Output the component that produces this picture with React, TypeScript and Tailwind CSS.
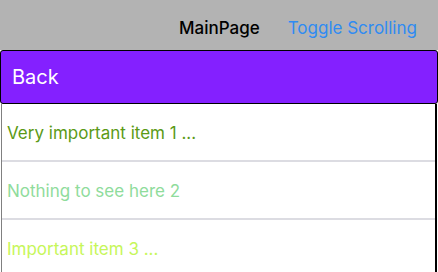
export default function App() {
    const items = [
        {label: 'Very important item 1 ...', color: 'text-[#5b9a16]'},
        {label: 'Nothing to see here 2', color: 'text-[#8fdc9c]'},
        {label: 'Important item 3 ...', color: 'text-[#c6f65a]'},
    ];

    return (
        <div className="w-[438px] h-[272px] overflow-hidden bg-white font-['Inter',sans-serif]">
            <div className="h-[50px] bg-[#b3b3b3] flex items-center text-[17px] pt-[7px]">
                <span className="ml-[179px] text-black font-medium">MainPage</span>
                <span className="ml-[28px] text-[#2f8bf2]">Toggle Scrolling</span>
            </div>
            <div className="h-[54px] bg-[#8420ff] border border-black rounded-[3px] flex items-center px-[11px]">
                <span className="text-white text-[20px]">Back</span>
            </div>
            <div className="ml-[1px] mr-[1px] border-l border-l-[#808080] border-r-2 border-r-black">
                {items.map((item, i) => (
                    <div key={i}>
                        {i > 0 && <div className="h-[2px] bg-[#dcdce2]"/>}
                        <div className={`h-[56px] flex items-center pl-[5px] pt-[3px] text-[17px] ${item.color}`}>
                            {item.label}
                        </div>
                    </div>
                ))}
            </div>
        </div>
    );
}
